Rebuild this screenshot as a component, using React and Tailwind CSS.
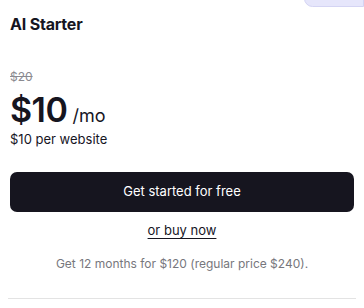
export default function App() {
  return (
    <div className="relative w-[364px] h-[308px] bg-white overflow-hidden" style={{ fontFamily: "Inter, 'Noto Sans', sans-serif" }}>
      <div className="absolute right-0 top-[-10px] w-[60px] h-[17px] rounded-bl-[10px] rounded-tl-[10px] bg-[#e6e6fb] border border-[#d4d4f3]" />
      <div className="flex flex-col px-[10px] pt-[13px]">
        <h2 className="text-[16px] leading-[22px] font-bold text-[#16151f] tracking-[-0.2px]">AI Starter</h2>
        <div className="mt-[35px] text-[12px] leading-[14px] text-[#8a8a90] line-through">$20</div>
        <div className="mt-[8px] flex items-baseline gap-[5px] text-[#16151f]">
          <span className="text-[34px] leading-[36px] font-semibold tracking-[-0.5px]">$10</span>
          <span className="text-[18px] leading-[20px]">/mo</span>
        </div>
        <div className="mt-[3px] text-[13px] leading-[16px] text-[#16151f]">$10 per website</div>
        <button className="mt-[25px] h-[40px] w-full rounded-[7px] bg-[#16151f] text-white text-[13px]">Get started for free</button>
        <div className="mt-[5px] text-center">
          <a className="text-[13px] leading-[18px] text-[#16151f] underline underline-offset-[3px]">or buy now</a>
        </div>
        <div className="mt-[15px] text-center text-[12px] leading-[16px] text-[#77777d]">Get 12 months for $120 (regular price $240).</div>
        <div className="mt-[26px] mx-[-2px] h-px bg-[#e3e3e3]" />
      </div>
    </div>
  );
}
